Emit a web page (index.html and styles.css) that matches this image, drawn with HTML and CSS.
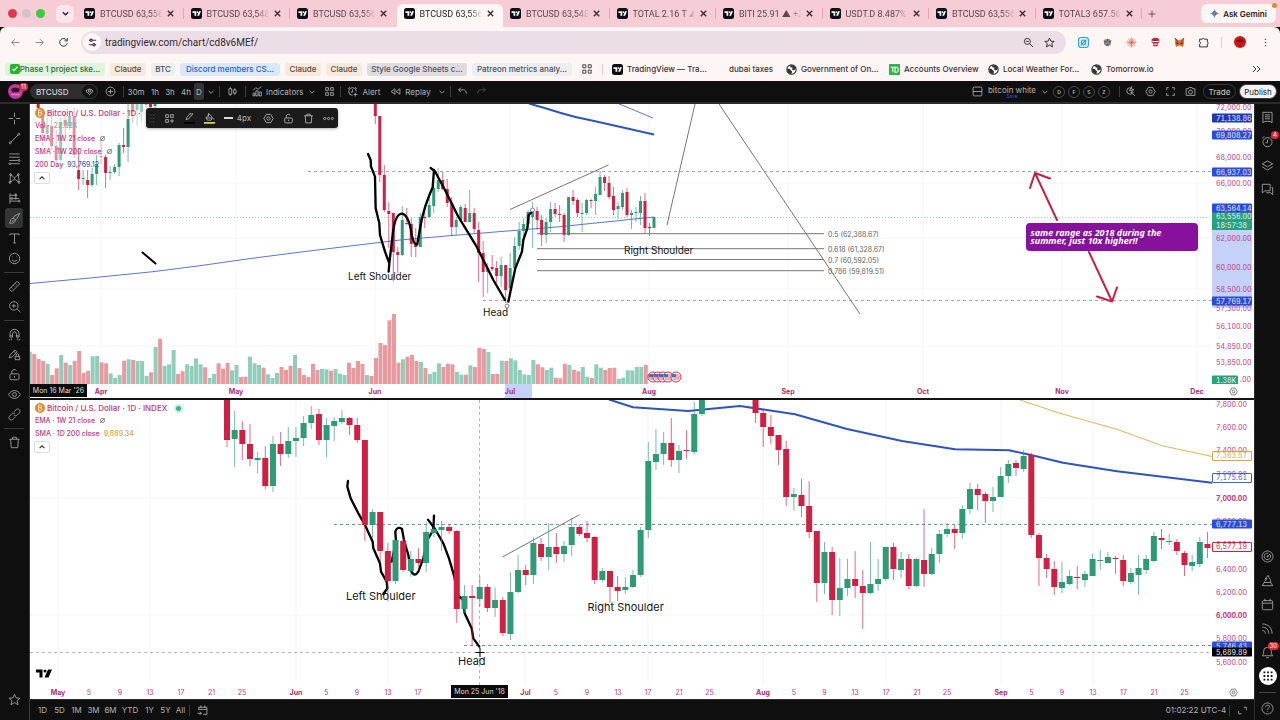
FILE: index.html
```html
<!DOCTYPE html>
<html lang="en">
<head>
<meta charset="utf-8">
<title>BTCUSD 63,556</title>
<link rel="stylesheet" href="styles.css">
</head>
<body>
<svg class="sprite" aria-hidden="true">
  <symbol id="tv" viewBox="0 0 22 22"><rect width="22" height="22" rx="5" fill="#0b0d12"/><path d="M3 6.500h7.500v9H7V10H3zM16 6.500h4l-3.800 9h-3.800z" fill="#fff"/><circle cx="13" cy="8.300" r="1.800" fill="#fff"/></symbol>
  <symbol id="x" viewBox="0 0 10 10"><path d="M2 2l6 6M8 2l-6 6"/></symbol>
  <symbol id="down" viewBox="0 0 10 10"><path d="M2 3.500l3 3 3-3"/></symbol>
  <symbol id="up" viewBox="0 0 10 10"><path d="M2 6.500l3-3 3 3"/></symbol>
  <symbol id="globe" viewBox="0 0 20 20"><circle cx="10" cy="10" r="8.500" fill="#fff" stroke="#333" stroke-width="2"/><path d="M2 8l5 1 2 3 2 1-1 5C5 18 2 14 2 8zM7 2l8 1 3 6-4 3-3-2 1-3-4-1z" fill="#333" stroke="none"/></symbol>
  <symbol id="apps" viewBox="0 0 20 20"><path d="M3 3h5v5H3zM12 3h5v5h-5zM3 12h5v5H3zM12 12h5v5h-5z"/></symbol>
  <symbol id="appsplus" viewBox="0 0 20 20"><path d="M3 3h5v5H3zM12 3h5v5h-5zM3 12h5v5H3zM14.500 11v7M11 14.500h7"/></symbol>
  <symbol id="cross" viewBox="0 0 20 20"><path d="M10 1v7M10 12v7M1 10h7M12 10h7"/></symbol>
  <symbol id="line" viewBox="0 0 20 20"><circle cx="3.500" cy="16.500" r="1.500"/><circle cx="16.500" cy="3.500" r="1.500"/><path d="M4.500 15.500l11-11"/></symbol>
  <symbol id="fib" viewBox="0 0 20 20"><path d="M2 3h16M2 8h16M2 13h13M5 18h13"/><circle cx="17" cy="13" r="1.500"/><circle cx="3" cy="18" r="1.500"/></symbol>
  <symbol id="pattern" viewBox="0 0 20 20"><path d="M3 16L4 4l6 5 6-5 1 12-7-5zM10 9v2"/><circle cx="4" cy="4" r="1.500"/><circle cx="16" cy="4" r="1.500"/><circle cx="3" cy="16" r="1.500"/><circle cx="17" cy="16" r="1.500"/></symbol>
  <symbol id="forecast" viewBox="0 0 20 20"><path d="M3 2v16M3 5h8M3 14h12M7 10h10M12 2v10M3 10h2"/><circle cx="12" cy="5" r="1.500"/><circle cx="17" cy="14" r="1.500"/><circle cx="6" cy="10" r="1.500"/></symbol>
  <symbol id="brush" viewBox="0 0 20 20"><path d="M2 17c2-1 1-5 4-7 3-1 6 1 5 4-1 3-6 4-9 3zM8 10l2-4 8-4-4 8-4 3M6 14h3"/></symbol>
  <symbol id="text" viewBox="0 0 20 20"><path d="M3 5V3h14v2M10 3v14M8 17h4"/></symbol>
  <symbol id="smile" viewBox="0 0 20 20"><circle cx="10" cy="10" r="8"/><path d="M6 12c2 3 6 3 8 0M7 7v1M13 7v1"/></symbol>
  <symbol id="ruler" viewBox="0 0 20 20"><path d="M2 14L14 2l4 4L6 18zM5 11l2 2M8 8l2 2M11 5l2 2"/></symbol>
  <symbol id="zoom" viewBox="0 0 20 20"><circle cx="9" cy="9" r="6.500"/><path d="M14 14l5 5M6 9h6M9 6v6"/></symbol>
  <symbol id="search" viewBox="0 0 20 20"><circle cx="8" cy="8" r="5.500"/><path d="M12 12l6 6M5.500 8h5"/></symbol>
  <symbol id="magnet" viewBox="0 0 20 20"><path d="M3 14V9a7 7 0 0 1 14 0v5h-4V9a3 3 0 0 0-6 0v5zM3 12h4M13 12h4M5 16v3M15 16v3M2 17v2M18 17v2"/></symbol>
  <symbol id="penlock" viewBox="0 0 20 20"><path d="M2 15l1-4 8-8 3 3-8 8zM9 5l3 3M11 13h7v5h-7zM12.500 13v-2a2 2 0 0 1 4 0v2"/></symbol>
  <symbol id="lock" viewBox="0 0 20 20"><rect x="3" y="9" width="14" height="9" rx="2"/><path d="M6 9V5a4 4 0 0 1 7-1M10 12v3"/></symbol>
  <symbol id="eye" viewBox="0 0 20 20"><path d="M1 10c4-8 14-8 18 0-4 8-14 8-18 0z"/><circle cx="10" cy="10" r="3"/></symbol>
  <symbol id="link" viewBox="0 0 20 20"><path d="M9 6l4-4c3-2 7 2 5 5l-4 4c-2 2-4 1-5 0M11 14l-4 4c-3 2-7-2-5-5l4-4c2-2 4-1 5 0"/></symbol>
  <symbol id="trash" viewBox="0 0 20 20"><path d="M2 5h16M7 5V2h6v3M4 5l1 13h10l1-13"/></symbol>
  <symbol id="star" viewBox="0 0 20 20"><path d="M10 2l2.500 5.500 6 .500-4.500 4 1.500 6-5.500-3.200L4.500 18 6 12 1.500 8l6-.500z"/></symbol>
  <symbol id="plus" viewBox="0 0 20 20"><path d="M10 3v14M3 10h14"/></symbol>
  <symbol id="circleplus" viewBox="0 0 20 20"><circle cx="10" cy="10" r="8"/><path d="M10 5.500v9M5.500 10h9"/></symbol>
  <symbol id="candles" viewBox="0 0 20 20"><path d="M6 2v16M14 4v12"/><path d="M3.500 5h5v10h-5zM11.500 7h5v6h-5z" fill="#0f0f0f"/></symbol>
  <symbol id="indic" viewBox="0 0 20 20"><path d="M2 8l5-5 4 3 6-5M2 18v-5h3v5zM7 18V9h4v9zM13 18v-7h4v7z"/></symbol>
  <symbol id="alarm" viewBox="0 0 20 20"><path d="M17 10a7 7 0 1 0-7 7M10 6v5h-3M2 5l3-3M15 2l3 3M15 12v7M12 15.500h7"/></symbol>
  <symbol id="clock" viewBox="0 0 20 20"><circle cx="10" cy="11" r="7"/><path d="M10 7v5H7M2 5l3-3M15 2l3 3"/></symbol>
  <symbol id="rewind" viewBox="0 0 20 20"><path d="M9 5v10l-7-5zM18 5v10l-7-5z"/></symbol>
  <symbol id="undo" viewBox="0 0 20 20"><path d="M7 3L3 7l4 4M3 7h9c3 0 5 3 5 7"/></symbol>
  <symbol id="redo" viewBox="0 0 20 20"><path d="M13 3l4 4-4 4M17 7H8c-3 0-5 3-5 7"/></symbol>
  <symbol id="layout" viewBox="0 0 20 20"><rect x="2" y="2" width="16" height="16" rx="2"/><path d="M2 10h16"/></symbol>
  <symbol id="quick" viewBox="0 0 20 20"><path d="M9 3a6 6 0 1 0 6 8M13 13l5 5M12 1l-4 7h4l-1 5 5-7h-4z"/></symbol>
  <symbol id="hex" viewBox="0 0 20 20"><path d="M6 2.500h8l4.500 7.500-4.500 7.500H6L1.500 10z"/><circle cx="10" cy="10" r="3"/></symbol>
  <symbol id="full" viewBox="0 0 20 20"><path d="M3 7V3h4M13 3h4v4M17 13v4h-4M7 17H3v-4"/></symbol>
  <symbol id="camera" viewBox="0 0 20 20"><path d="M2 5h4l1-2h6l1 2h4v12H2z"/><circle cx="10" cy="11" r="3.500"/></symbol>
  <symbol id="pencil" viewBox="0 0 20 20"><path d="M4 12l1-4 8-9 3 3-8 9zM11 1l3 3"/><path class="ink-black" d="M0 18h20"/></symbol>
  <symbol id="bucket" viewBox="0 0 20 20"><path d="M4 8l6-6 5 6-2 5H6zM8 0v7M3 9h12M16 9l2 3"/><path class="ink-yellow" d="M0 18h20"/></symbol>
  <symbol id="dots" viewBox="0 0 20 20"><circle cx="3" cy="10" r="2"/><circle cx="10" cy="10" r="2"/><circle cx="17" cy="10" r="2"/></symbol>
  <symbol id="grip" viewBox="0 0 20 20"><path d="M7 3v2M12 3v2M7 9v2M12 9v2M7 15v2M12 15v2"/></symbol>
  <symbol id="list" viewBox="0 0 20 20"><path d="M3 2h14v16l-3-2H6l-3 2zM6 6h8M6 9h8M6 12h8"/></symbol>
  <symbol id="layers" viewBox="0 0 20 20"><path d="M10 3l8 4.500-8 4.500-8-4.500zM2 12l8 5 8-5"/></symbol>
  <symbol id="chat" viewBox="0 0 20 20"><path d="M2 2h12v10H6l-4 3zM16 7h2v11l-3-3H8"/></symbol>
  <symbol id="target" viewBox="0 0 20 20"><circle cx="10" cy="10" r="8.500"/><path d="M14 7a5 5 0 1 1-3-2"/><path d="M10 10l4-4"/><circle cx="10" cy="10" r="1"/></symbol>
  <symbol id="pine" viewBox="0 0 20 20"><path d="M2 18h16l-3-5H5zM5 13c0-3 4-3 4-6l-3 1 5-6c1 4 4 6 4 11"/></symbol>
  <symbol id="cal" viewBox="0 0 20 20"><rect x="2" y="4" width="16" height="14" rx="2"/><path d="M2 8h16M6 1v4M14 1v4"/></symbol>
  <symbol id="goto" viewBox="0 0 20 20"><path d="M3 9V4h15v13h-7M3 8h15M7 1v4M14 1v4M1 15h7M5 12l3 3-3 3"/></symbol>
  <symbol id="feed" viewBox="0 0 20 20"><path d="M2 3c9 0 15 6 15 15M2 8c6 0 10 4 10 10M2 13c3 0 5 2 5 5"/></symbol>
  <symbol id="bell" viewBox="0 0 20 20"><path d="M2 15h16l-2-3V8A6 6 0 0 0 4 8v4zM8 18h4"/></symbol>
  <symbol id="help" viewBox="0 0 20 20"><circle cx="10" cy="10" r="8.500"/><path d="M7 8c0-4 6-4 6-1 0 2-3 2-3 5M10 14v1"/></symbol>
  <symbol id="expand" viewBox="0 0 20 20"><path d="M12 4h5v5M3 11v5h5"/></symbol>
  <symbol id="ban" viewBox="0 0 10 10"><circle cx="5" cy="5" r="3"/><path d="M2 8l6-6"/></symbol>
  <symbol id="btc" viewBox="0 0 20 20"><circle cx="10" cy="10" r="10" fill="#e08a2e" stroke="none"/><path d="M7 5h4c3 0 3 4 .500 4.500C15 10 14 15 11 15H7zM8 9.500h4M9 3v2M9 15v2" stroke="#fff"/></symbol>
</svg>

<header class="tabstrip">
  <div class="lights"><i class="red"></i><i class="grey"></i><i class="green"></i></div>
  <button class="tabsearch" aria-label="Search tabs"><svg><use href="#down"/></svg></button>
  <nav class="tabs" id="tabs"></nav>
  <button class="newtab" aria-label="New tab"><svg><use href="#plus"/></svg></button>
  <button class="gemini"><svg viewBox="0 0 20 20"><path d="M10 0q1.500 8.500 10 10-8.500 1.500-10 10-1.500-8.500-10-10 8.500-1.500 10-10z" fill="#3b7de9"/><path d="M10 0q1.500 8.500 10 10H10z" fill="#d95a4a"/><path d="M0 10q8.500 1.500 10 10V10z" fill="#4aa567"/></svg>Ask Gemini<i></i></button>
</header>

<div class="toolbar">
  <button aria-label="Back" class="dim"><svg viewBox="0 0 20 20"><path d="M17 10H3M9 4l-6 6 6 6"/></svg></button>
  <button aria-label="Forward" class="dim"><svg viewBox="0 0 20 20"><path d="M3 10h14M11 4l6 6-6 6"/></svg></button>
  <button aria-label="Reload"><svg viewBox="0 0 20 20"><path d="M16 6a7 7 0 1 0 1 5M17 2v5h-5"/></svg></button>
  <div class="omnibox">
    <button class="site" aria-label="Site information"><svg viewBox="0 0 20 20"><path d="M2 5h3M10 5h8M2 15h8M15 15h3"/><circle cx="7" cy="5" r="2.500"/><circle cx="13" cy="15" r="2.500"/></svg></button>
    <input type="text" aria-label="Address" value="tradingview.com/chart/cd8v6MEf/">
    <button aria-label="Zoom"><svg><use href="#search"/></svg></button>
    <button aria-label="Bookmark"><svg><use href="#star"/></svg></button>
  </div>
  <div class="extensions">
    <button aria-label="Extension"><svg viewBox="0 0 20 20"><rect x="1" y="1" width="18" height="18" rx="5" fill="#e2f4fd" stroke="#2d9fda" stroke-width="2"/><path d="M6 10c0-6 8-6 8 0s-8 6-8 0M5 15L15 5" stroke="#2d9fda" stroke-width="2"/></svg></button>
    <button aria-label="Extension"><svg viewBox="0 0 20 20"><path d="M3 6q7-6 14 0l-1 7-4 4H8l-4-4z" fill="#8c8c8c" stroke="none"/><path d="M4 9h4M12 9h4M8 14h4M10 4v4" stroke="#444"/></svg></button>
    <button aria-label="Claude"><svg viewBox="0 0 20 20"><path d="M10 1v18M1 10h18M4 4l12 12M16 4L4 16M7 2l6 16M13 2L7 18M2 7l16 6M18 7L2 13" stroke="#d2604a" stroke-width="1"/></svg></button>
    <button aria-label="Extension"><svg viewBox="0 0 20 20"><path d="M3 4q7-5 14 0v6l-3 2v5H6v-5l-3-2z" fill="#c62b3b" stroke="none"/><path d="M4 8h12M7 13h6" stroke="#fff"/><path d="M7 6h6" stroke="#333"/></svg></button>
    <button aria-label="MetaMask"><svg viewBox="0 0 20 20"><path d="M2 2l6 4h4l6-4v10l-2 6-4-2H8l-4 2-2-6z" fill="#df6a2c" stroke="none"/><path d="M4 11l4 1M16 11l-4 1" stroke="#43251a" stroke-width="2"/><path d="M2 2l5 7M18 2l-5 7" stroke="#8d3a20"/></svg></button>
    <button aria-label="Extensions"><svg viewBox="0 0 20 20"><path d="M3 4h5q1-4 4 0h5v5q4 2 0 4v5H3v-5q4-2 0-4z"/></svg></button>
  </div>
  <button class="profile" aria-label="Profile"><svg viewBox="0 0 20 20"><circle cx="10" cy="10" r="10" fill="#d01818" stroke="none"/><path d="M5 8q5-4 10 0v2H5zM8 15h4" fill="#8c0d12" stroke="#8c0d12"/></svg></button>
  <button aria-label="Menu" class="menu"><svg viewBox="0 0 20 20"><path d="M10 3v2M10 9v2M10 15v2" stroke-width="2.500"/></svg></button>
</div>

<nav class="bookmarks">
  <a href="#" class="chip lg phase"><span class="tick"><svg viewBox="0 0 10 10"><path d="M2 5l2 2 4-5"/></svg></span>Phase 1 project ske...</a>
  <a href="#" class="chip sm sand">Claude</a>
  <a href="#" class="chip xs mist">BTC</a>
  <a href="#" class="chip lg sky">Discord members CS...</a>
  <a href="#" class="chip sm sand">Claude</a>
  <a href="#" class="chip sm sand">Claude</a>
  <a href="#" class="chip lg ash">Style Google Sheets c...</a>
  <a href="#" class="chip lg mist">Patreon metrics analy...</a>
  <button class="appsbtn" aria-label="Apps"><svg><use href="#apps"/></svg></button>
  <a href="#" class="mark first"><svg><use href="#tv"/></svg>TradingView — Tra...</a>
  <a href="#" class="mark narrow"><svg></svg>dubai taxes</a>
  <a href="#" class="mark"><svg><use href="#globe"/></svg>Government of On...</a>
  <a href="#" class="mark bank"><svg viewBox="0 0 20 20"><path d="M0 0h20v20H0z" fill="#2cb34a" stroke="none"/><path d="M3 6h8M7 6v9M11 6v9h3q3-1 3-4.500T14 6h-3" stroke="#fff" stroke-width="2"/></svg>Accounts Overview</a>
  <a href="#" class="mark"><svg><use href="#globe"/></svg>Local Weather For...</a>
  <a href="#" class="mark"><svg><use href="#globe"/></svg>Tomorrow.io</a>
  <button class="more" aria-label="More bookmarks"><svg viewBox="0 0 10 10"><path d="M2 2l3 3-3 3M6 2l3 3-3 3"/></svg></button>
</nav>

<div class="tvbar">
  <button class="avatar" aria-label="Account"><svg viewBox="0 0 20 20"><circle cx="10" cy="10" r="10" fill="#c33a9c"/><path d="M4 7q6-5 12 0l-2 4H6z" fill="#30142e"/><path d="M4 13h12v2H4z" fill="#f06cc8"/></svg><span class="badge">11</span></button>
  <div class="symbol"><button>BTCUSD</button><span><svg viewBox="0 0 20 20"><path d="M2 9q8-9 16 0l-8 8z"/><circle cx="10" cy="9" r="2.500"/></svg></span></div>
  <button class="w24" aria-label="Compare"><svg><use href="#circleplus"/></svg></button>
  <i class="sep"></i>
  <button class="w24">30m</button><button class="w14">1h</button><button class="w16">3h</button><button class="w16">4h</button><button class="w10 on">D</button>
  <button class="w14 caret" aria-label="More intervals"><svg><use href="#down"/></svg></button>
  <i class="sep"></i>
  <button class="w24" aria-label="Chart type"><svg><use href="#candles"/></svg></button>
  <i class="sep"></i>
  <button class="named wide"><svg><use href="#indic"/></svg>Indicators</button>
  <button class="w14 caret" aria-label="Favourites"><svg><use href="#down"/></svg></button>
  <button class="w20" aria-label="Templates"><svg><use href="#apps"/></svg></button>
  <i class="sep"></i>
  <button class="named"><svg><use href="#alarm"/></svg>Alert</button>
  <button class="named"><svg><use href="#rewind"/></svg>Replay</button>
  <button class="w14 caret" aria-label="Replay options"><svg><use href="#down"/></svg></button>
  <i class="sep"></i>
  <button class="w24" aria-label="Undo"><svg><use href="#undo"/></svg></button>
  <button class="w14 faint" aria-label="Redo"><svg><use href="#redo"/></svg></button>
  <span class="grow"></span>
  <button class="w20" aria-label="Layout"><svg><use href="#layout"/></svg></button>
  <button class="layoutname">bitcoin white<small>Save</small></button>
  <button class="w16 caret" aria-label="Layouts"><svg><use href="#down"/></svg></button>
  <div class="rounds"><button>D</button><button>F</button><button>S</button><button>Z</button></div>
  <i class="sep"></i>
  <button class="w20" aria-label="Quick search"><svg><use href="#quick"/></svg></button>
  <button class="w20" aria-label="Settings"><svg><use href="#hex"/></svg></button>
  <button class="w20" aria-label="Fullscreen"><svg><use href="#full"/></svg></button>
  <button class="w20" aria-label="Snapshot"><svg><use href="#camera"/></svg></button>
  <button class="trade">Trade</button><button class="publish">Publish</button>
</div>

<main class="workspace">
  <aside class="left">
    <button aria-label="Cross"><svg><use href="#cross"/></svg></button>
    <button aria-label="Trend line"><svg><use href="#line"/></svg></button>
    <button aria-label="Fibonacci"><svg><use href="#fib"/></svg></button>
    <button aria-label="Patterns"><svg><use href="#pattern"/></svg></button>
    <button aria-label="Forecasting"><svg><use href="#forecast"/></svg></button>
    <button aria-label="Brush" class="on"><svg><use href="#brush"/></svg></button>
    <button aria-label="Text"><svg><use href="#text"/></svg></button>
    <button aria-label="Emoji"><svg><use href="#smile"/></svg></button>
    <hr>
    <button aria-label="Measure"><svg><use href="#ruler"/></svg></button>
    <button aria-label="Zoom in"><svg><use href="#zoom"/></svg></button>
    <hr>
    <button aria-label="Magnet"><svg><use href="#magnet"/></svg></button>
    <button aria-label="Keep drawing"><svg><use href="#penlock"/></svg></button>
    <button aria-label="Lock"><svg><use href="#lock"/></svg></button>
    <button aria-label="Hide"><svg><use href="#eye"/></svg></button>
    <button aria-label="Sync"><svg><use href="#link"/></svg></button>
    <hr>
    <button aria-label="Remove"><svg><use href="#trash"/></svg></button>
    <span class="grow"></span>
    <button aria-label="Favourites"><svg><use href="#star"/></svg></button>
  </aside>

  <div class="charts">
    <section class="chart top">
      <div class="plot">
        <svg class="canvas" viewBox="30 104 1182 280" preserveAspectRatio="none">
          <path class="gridline" d="M101 104V384M236 104V384M375 104V384M510 104V384M649 104V384M788 104V384M923 104V384M1062 104V384M1197 104V384M30 183H1212M30 238H1212M30 289H1212M30 346H1212"/>
          <g id="vol"></g>
          <path class="last" d="M30 217.500H1212"/>
          <path class="level grey" d="M308 171.500H1212M483 300.500H1212"/>
          <path class="ma thin" d="M30 283.500L90 278L153 271.700L200 265.700L247 259L293 253L350 246L400 240L450 235.700L560 226.700L654 217"/>
          <g id="topcandles"></g>
          <path class="ma thick" d="M529 103.500Q545 108 560 112.700T593 120.700L654 134.500"/>
          <path class="ma thin" d="M618 103.500L653 118"/>
          <path class="ray" d="M695 104L667 225M719 104L860 314M510 209.500L608.500 165"/>
          <path class="ray" d="M537 233.700H824M537 248.700H824M537 259.500H824M537 270.700H824"/>
          <g class="pen" transform="translate(330 100) scale(.3333)">
            <path d="M114 162L122 180 123 200 135 230 137 325 148 370 150 405 165 455 178 490 176 515M178 490L188 405Q195 342 215 341Q232 342 242 385Q250 440 262 432L272 375Q282 320 308 262L312 210"/>
            <path d="M302 204L315 214 350 280 385 350 440 440 460 480 490 540 525 600M535 605L556 505 576 455 580 420 592 385 596 345 605 336"/>
          </g>
          <path class="pen small" d="M142.500 252.500L155.500 263.500"/>
          <path class="arrow" d="M1057 220L1035 173M1030 188L1035 173L1050 178.500M1089 252L1112 301.500M1097 296.500L1112 301.500L1117 287.500"/>
          <g class="handle"><circle cx="532.500" cy="210" r="2"/><circle cx="507" cy="306" r="2"/></g>
          <g class="flags" id="flags"></g>
        </svg>
        <div class="legend">
          <h2><svg><use href="#btc"/></svg>Bitcoin / U.S. Dollar · 1D ·</h2>
          <p>Vol · <span class="volume">22.32K</span></p>
          <p>EMA · 1W 21 close <svg><use href="#ban"/></svg></p>
          <p>SMA · 1W 200 close <svg><use href="#ban"/></svg></p>
          <p>200 Day <span class="blue">93,769.12</span></p>
          <button aria-label="Collapse"><svg><use href="#up"/></svg></button>
        </div>
        <div class="drawbar">
          <svg><use href="#grip"/></svg>
          <button aria-label="Templates"><svg><use href="#appsplus"/></svg></button>
          <button aria-label="Line colour"><svg><use href="#pencil"/></svg></button>
          <button aria-label="Fill colour"><svg><use href="#bucket"/></svg></button>
          <button class="px"><i></i>4px</button>
          <button aria-label="Settings"><svg><use href="#hex"/></svg></button>
          <button aria-label="Lock"><svg><use href="#lock"/></svg></button>
          <button aria-label="Delete"><svg><use href="#trash"/></svg></button>
          <button aria-label="More"><svg><use href="#dots"/></svg></button>
        </div>
        <div class="notes" id="topnotes"></div>
      </div>
      <div class="prices" id="topprices"></div>
      <div class="times" id="toptimes"></div>
      <button class="axisset" aria-label="Axis settings"><svg><use href="#hex"/></svg></button>
    </section>

    <section class="chart bottom">
      <div class="plot">
        <svg class="canvas" viewBox="30 400 1182 285" preserveAspectRatio="none">
          <path class="gridline" d="M58 400V685M150 400V685M296 400V685M388 400V685M525 400V685M648 400V685M763 400V685M886 400V685M1001 400V685M1093 400V685M30 498H1212M30 615H1212"/>
          <path class="level" d="M334 524.500H1212M464 645.500H1212"/>
          <path class="hair" d="M30 652.500H1212M479.500 400V685"/>
          <path class="ma thick" d="M609 399.500L633 407.300L688 411L740 406L795 414.300L847 429L902 441L955 449.300L1009 450.300L1032 455.300L1063 462.700L1117 471.300L1212 482.700"/>
          <path class="ma gold" d="M1020 400L1060 413.300L1117 429.300L1162 445.700L1212 456.500"/>
          <path class="ray" d="M502.500 557L579.500 514.700"/>
          <g class="pen" transform="translate(320 395) scale(.3333)">
            <path d="M84 258L82 275 92 310 115 355 135 390 158 440 160 460 180 505 183 530 200 560 202 580 190 597M215 500L228 440 226 410Q232 392 246 402L252 435 265 480 272 525Q283 550 295 530L310 490 322 435 340 405 342 362"/>
            <path d="M324 374L345 402 370 445 387 490 403 545 412 600 430 615 434 655 455 700 460 730 478 755"/>
          </g>
          <g id="botcandles"></g>
          <path class="cursor" d="M475.500 652.500H484.500M480 648V657"/>
        </svg>
        <div class="legend">
          <h2><svg><use href="#btc"/></svg>Bitcoin / U.S. Dollar · 1D · INDEX<i class="live"></i></h2>
          <p>EMA · 1W 21 close <svg><use href="#ban"/></svg></p>
          <p>SMA · 1D 200 close <span class="amber">9,889.34</span></p>
          <button aria-label="Collapse"><svg><use href="#up"/></svg></button>
        </div>
        <svg class="brand" viewBox="0 0 32 18"><path d="M0 1h13v16H7V7H0zM24 1h8l-7 16h-8z"/><circle cx="18" cy="4" r="3"/></svg>
        <div class="notes" id="botnotes"></div>
      </div>
      <div class="prices" id="botprices"></div>
      <div class="times" id="bottimes"></div>
      <button class="axisset" aria-label="Axis settings"><svg><use href="#hex"/></svg></button>
    </section>

    <footer class="ranges">
      <button>1D</button><button>5D</button><button>1M</button><button>3M</button><button>6M</button><button class="ytd">YTD</button><button>1Y</button><button class="slim">5Y</button><button class="slim">All</button>
      <i class="sep"></i>
      <button aria-label="Go to date" class="goto"><svg><use href="#goto"/></svg></button>
      <span class="grow"></span>
      <button class="zone">01:02:22 UTC-4</button>
      <i class="sep"></i>
      <button aria-label="Maximise" class="goto"><svg><use href="#expand"/></svg></button>
    </footer>
  </div>

  <aside class="right">
    <button aria-label="Watchlist"><svg><use href="#list"/></svg></button>
    <button aria-label="Alerts"><svg><use href="#clock"/></svg><span class="badge">4</span></button>
    <button aria-label="Object tree"><svg><use href="#layers"/></svg></button>
    <button aria-label="Chats"><svg><use href="#chat"/></svg></button>
    <span class="grow"></span>
    <button aria-label="Screener"><svg><use href="#target"/></svg></button>
    <button aria-label="Pine"><svg><use href="#pine"/></svg></button>
    <button aria-label="Calendar"><svg><use href="#cal"/></svg></button>
    <button aria-label="News"><svg><use href="#feed"/></svg></button>
    <button aria-label="Notifications"><svg><use href="#bell"/></svg><span class="badge">30</span></button>
    <button aria-label="Products"><svg class="big" viewBox="0 0 20 20"><circle cx="10" cy="10" r="10" fill="#fff" stroke="none"/><path d="M5 6h2M9 6h2M13 6h2M5 10h2M9 10h2M13 10h2M5 14h2M9 14h2M13 14h2" stroke="#111" stroke-width="2"/></svg></button>
    <hr>
    <button aria-label="Help"><svg><use href="#help"/></svg></button>
  </aside>
</main>
<script src="chart.js"></script>
</body>
</html>
```

FILE: styles.css
```css
* { box-sizing: border-box; }
body {
  margin: 0; height: 100vh; overflow: hidden;
  display: grid; grid-template-rows: 27px 27px 27px 23px minmax(0, 1fr);
  grid-template-columns: minmax(0, 1fr);
  font-family: Inter, "Liberation Sans", sans-serif; font-size: 8px; line-height: 10px;
  background: #0f0f0f; color: #35282f;
}
button { font: inherit; color: inherit; background: none; border: 0; padding: 0; margin: 0; display: flex; align-items: center; justify-content: center; flex: none; position: relative; white-space: nowrap; }
a { color: inherit; text-decoration: none; }
svg { width: 12px; height: 12px; flex: none; fill: none; stroke: currentColor; stroke-width: 1.5; overflow: visible; }
.sprite { position: absolute; width: 0; height: 0; }
.grow { flex: 1; }
.ink-black { stroke: #000; stroke-width: 3; }
.ink-yellow { stroke: #e9e34a; stroke-width: 3; }
#tv path, #tv rect, #tv circle { stroke: none; }

.tabstrip { display: flex; align-items: center; background: #f6cdd7; }
.lights { display: flex; gap: 5px; padding-left: 8px; width: 56px; }
.lights i { width: 9px; height: 9px; border-radius: 50%; }
.lights .red { background: #dc3a4e; }
.lights .grey { background: #d3c3c8; }
.lights .green { background: #3fca3c; }
.tabsearch { width: 18px; height: 18px; border-radius: 6px; background: #fbe6ec; color: #222; }
.tabsearch svg { width: 9px; height: 9px; }
.tabs { flex: 0 1 1065px; display: flex; margin-left: 3px; height: 27px; min-width: 0; }
.tab { flex: 1 1 0; min-width: 0; display: flex; align-items: center; gap: 3px; padding: 0 8px 0 7px; position: relative; }
.tab > a { flex: 1; min-width: 0; display: flex; align-items: center; gap: 5px; font-family: Roboto, Inter, sans-serif; font-size: 9px; color: #5b464e; }
.tab > a svg { width: 11px; height: 11px; }
.tab > a span { flex: 1; min-width: 0; overflow: hidden; white-space: nowrap; -webkit-mask: linear-gradient(90deg, #000 80%, transparent); mask: linear-gradient(90deg, #000 80%, transparent); }
.tab button { width: 10px; color: #3c2a31; }
.tab button svg { width: 9px; height: 9px; }
.tab::after { content: ""; position: absolute; right: 0; top: 8px; height: 11px; width: 1px; background: #eba4b5; }
.tab.active::after, .tab.before::after { display: none; }
.tab.active::before { content: ""; position: absolute; inset: 4px 0 0 0; background: #fdf6f4; border-radius: 6px 6px 0 0; }
.tab.active > * { z-index: 1; }
.tab.active > a { color: #33262b; }
.newtab { width: 20px; color: #4a343c; }
.newtab svg { width: 10px; height: 10px; }
.gemini { margin: 0 4px 0 auto; height: 19px; width: 75px; gap: 4px; background: #fdf6f4; border-radius: 6px; color: #2b2226; font-weight: 600; font-size: 8px; }
.gemini svg { width: 9px; height: 9px; stroke: none; }
.gemini i { position: absolute; right: -1px; top: -1px; width: 5px; height: 5px; border-radius: 50%; background: #dd8a34; }

.toolbar { display: flex; align-items: center; background: #fdf6f4; padding: 3px 0 0 3px; border-radius: 6px 6px 0 0; color: #3a2f34; }
.toolbar > button { width: 24px; height: 20px; }
.toolbar svg { width: 11px; height: 11px; stroke-width: 1.8; }
.dim { color: #8f858a; }
.omnibox { flex: 1; min-width: 0; display: flex; align-items: center; height: 23px; margin-left: 6px; padding: 0 6px 0 2px; border-radius: 12px; background: #ecdee6; }
.omnibox .site { width: 18px; height: 18px; border-radius: 50%; background: #fdf6f9; }
.omnibox .site svg { width: 9px; height: 9px; stroke-width: 2.5; }
.omnibox input { flex: 1; min-width: 0; border: 0; background: none; font: 10px Roboto, Inter, sans-serif; color: #33262d; padding: 0 0 0 4px; outline: 0; }
.omnibox button { width: 21px; }
.extensions { display: flex; border-right: 1px solid #efc8cf; padding-right: 6px; margin-left: 5px; }
.extensions button { width: 24px; }
.toolbar > .profile { width: 36px; }
.profile svg { width: 12px; height: 12px; }
.toolbar > .menu { width: 14px; margin-right: 8px; }

.bookmarks { display: flex; align-items: center; gap: 5px; padding: 3px 5px 0; background: #fdf6f4; overflow: hidden; color: #3c3136; font-size: 8px; white-space: nowrap; }
.chip { height: 13px; border-radius: 3px; display: flex; align-items: center; justify-content: center; flex: none; font-weight: 500; font-size: 8px; }
.chip.lg { width: 100px; }
.chip.sm { width: 36px; }
.chip.xs { width: 24px; }
.phase { background: #dff3df; color: #2c6b3c; }
.sand { background: #f8e9dc; color: #57493f; }
.mist { background: #eceef0; color: #47515a; }
.sky { background: #d9e8fa; color: #2563c9; }
.ash { background: #dedcdf; color: #55515a; }
.tick { width: 10px; height: 10px; background: #23b52e; border-radius: 2px; display: grid; place-items: center; color: #fff; }
.tick svg { width: 8px; height: 8px; }
.appsbtn { width: 20px; height: 14px; }
.mark { display: flex; align-items: center; gap: 4px; flex: 0 0 98px; font-weight: 500; }
.mark svg { width: 11px; height: 11px; stroke-width: 1; }
.mark.first { border-left: 1px solid #efc8cf; padding-left: 9px; flex-basis: 107px; }
.mark.narrow { flex-basis: 67px; }
.mark.bank { flex-basis: 94px; }
.more { margin: 0 14px 0 auto; }
.more svg { width: 10px; height: 10px; stroke-width: 1; }

.tvbar { display: flex; align-items: center; background: #0f0f0f; border-bottom: 2px solid #2c2c2c; color: #b4b4b4; font-size: 8px; }
.tvbar button { height: 19px; }
.tvbar svg { width: 11px; height: 11px; }
.sep { width: 1px; height: 11px; background: #3b3b3b; margin: 0 0 0 1px; flex: none; }
.avatar { width: 30px; }
.tvbar .avatar svg { width: 15px; height: 15px; stroke: none; }
.badge { position: absolute; background: #e0253f; color: #fff; font-size: 6px; line-height: 8px; min-width: 8px; padding: 0 2px; border-radius: 4px; right: 2px; top: 1px; }
.symbol { display: flex; align-items: center; width: 68px; height: 15px; border-radius: 8px; background: #2e2e2e; }
.symbol button { flex: 1; color: #d4d4d4; font-size: 8px; font-weight: 500; justify-content: flex-start; padding-left: 6px; }
.symbol span { width: 15px; height: 13px; border-radius: 8px; background: #141414; display: grid; place-items: center; margin-right: 1px; }
.tvbar .symbol svg { width: 9px; height: 9px; stroke-width: 2; }
.w10 { width: 10px; } .w14 { width: 14px; } .w16 { width: 16px; } .w20 { width: 20px; } .w24 { width: 24px; }
.tvbar .on { background: #343434; border-radius: 2px; height: 17px; }
.tvbar .caret svg { width: 8px; height: 8px; stroke-width: 1; }
.faint { color: #555; }
.named { gap: 4px; padding: 0 4px 0 6px; }
.named.wide { gap: 3px; padding-right: 2px; }
.layoutname { flex-direction: column; width: 50px; font-size: 8px; line-height: 8px; padding-top: 2px; }
.layoutname small { font-size: 5px; line-height: 5px; color: #2b50d8; }
.rounds { display: flex; gap: 3px; margin-right: 8px; }
.tvbar .rounds button { width: 12px; height: 12px; border: 1px solid #4a4a4a; border-radius: 50%; font-size: 5px; font-weight: 600; line-height: 6px; }
.trade, .publish { border-radius: 8px; border: 1px solid #3a3a3a; }
.tvbar .trade { width: 33px; height: 15px; margin: 0 3px; color: #d0d0d0; }
.tvbar .publish { width: 38px; height: 15px; background: #f3f3f3; color: #222; margin-right: 3px; }

.workspace { display: grid; grid-template-columns: 30px minmax(0, 1fr) 26px; min-height: 0; }
.left, .right { display: flex; flex-direction: column; align-items: center; background: #0f0f0f; color: #a9a9a9; min-height: 0; }
.left { padding: 4px 1px 11px 0; border-right: 1px solid #3a3a3a; }
.left button { width: 18px; height: 20px; flex: 0 1 auto; }
.left .on { background: #343434; border-radius: 3px; }
.left svg, .right svg { width: 13px; height: 13px; stroke-width: 1.3; }
.left hr { width: 20px; height: 1px; border: 0; background: #3a3a3a; margin: 4px 0 3px; flex: none; }
.right { padding-top: 1px; border-left: 1px solid #2c2c2c; }
.right button { width: 25px; height: 24px; }
.right svg.big { width: 18px; height: 18px; }
.right .badge { right: 1px; top: 2px; }
.right hr { width: 17px; height: 1px; border: 0; background: #444; margin: 4px 0 3px; }

.charts { display: flex; flex-direction: column; min-width: 0; min-height: 0; }
.chart { display: grid; grid-template-columns: minmax(0, 1fr) 42px; grid-template-rows: minmax(0, 1fr) 14px; background: #fff; min-height: 0; }
.top { flex: 294 1 0; }
.bottom { flex: 299 1 0; border-top: 2px solid #141414; }
.plot, .prices, .times { position: relative; min-width: 0; min-height: 0; overflow: hidden; }
.canvas { position: absolute; inset: 0; width: 100%; height: 100%; overflow: hidden; }
.gridline { stroke: #f6f6f7; stroke-width: 1; }
.last { stroke: #a9d8c8; stroke-width: 1; stroke-dasharray: 1 2; }
.level { stroke: #6d8fc4; stroke-width: 1; stroke-dasharray: 3 3; }
.level.grey { stroke: #9aa8b0; }
.hair { stroke: #b4b8be; stroke-width: 1; stroke-dasharray: 3 3; }
.ma { stroke: #2f55bd; stroke-linejoin: round; }
.ma.thin { stroke: #5b78c9; stroke-width: 1; }
.ma.thick { stroke-width: 2; }
.ma.gold { stroke: #dcb65e; stroke-width: 1; }
.ray { stroke: #777; stroke-width: 1; }
.pen { stroke: #000; stroke-width: 7; stroke-linecap: round; stroke-linejoin: round; }
.pen.small { stroke-width: 2; }
.arrow { stroke: #c9203f; stroke-width: 2; stroke-linecap: round; stroke-linejoin: round; }
.handle { fill: #fff; stroke: #6b7fc9; stroke-width: 1; }
.cursor { stroke: #000; stroke-width: 1; }
.bull { fill: #2e9b77; stroke: none; }
.bear { fill: #cf1f43; stroke: none; }
.soft { opacity: .5; }
.wick { opacity: .65; }
.vbull { fill: #8fceba; stroke: none; }
.vbear { fill: #ea9a9f; stroke: none; }

.legend { position: absolute; left: 4px; top: 3px; color: #c4377d; display: flex; flex-direction: column; align-items: flex-start; }
.bottom .legend { top: 2px; }
.legend h2 { margin: 0; display: flex; align-items: center; gap: 2px; font-size: 8px; line-height: 12px; font-weight: 500; white-space: nowrap; padding-left: 1px; }
.legend h2 svg { width: 10px; height: 10px; }
.legend p { margin: 0; display: flex; align-items: center; gap: 4px; font-size: 7px; line-height: 13px; font-weight: 500; white-space: nowrap; padding-left: 1px; }
.legend p svg { width: 7px; height: 7px; stroke-width: 1; color: #555; }
.legend button { width: 16px; height: 12px; margin-top: 1px; border: 1px solid #ddd; border-radius: 2px; background: #fff; color: #333; }
.legend button svg { width: 8px; height: 8px; }
.volume { color: #8aa79c; } .blue { color: #3c66c6; } .amber { color: #d9a548; }
.live { width: 9px; height: 9px; border-radius: 50%; background: #3fb389; border: 2px solid #cdeee1; margin-left: 5px; }
.brand { position: absolute; left: 6px; bottom: 7px; width: 16px; height: 9px; fill: #000; stroke: none; }

.drawbar { position: absolute; left: 116px; top: 4px; height: 20px; display: flex; align-items: center; background: #1b1b1b; border-radius: 3px; color: #b8b8b8; box-shadow: 0 1px 3px #0005; }
.drawbar > svg { width: 11px; height: 11px; margin-left: 1px; color: #555; }
.drawbar button { width: 20px; height: 20px; }
.drawbar button svg { width: 11px; height: 11px; }
.drawbar > svg + button { margin-left: 1px; }
.drawbar .px { width: 39px; gap: 4px; font-size: 8px; padding-right: 2px; }
.px i { width: 9px; height: 2px; background: #ddd; }

.note { position: absolute; transform: translate(0, -50%); white-space: nowrap; color: #161616; font-size: 10px; line-height: 12px; }
.note.large { font-size: 11px; }
.note.fib { font-size: 7px; line-height: 9px; color: #666; }
.note.callout { background: #87109c; color: #fff; border-radius: 4px; width: 172px; height: 28px; padding: 6px 5px 4px; font: italic 700 9px/8px "Noto Sans", "Open Sans", sans-serif; }
.price { position: absolute; right: 2px; width: 40px; padding-left: 4px; transform: translateY(-50%); font-size: 7px; line-height: 9px; color: #c4377d; white-space: nowrap; font-variant-numeric: tabular-nums; }
.price.bold { font-weight: 700; }
.price.tag { color: #eef; background: #2a4bdb; border-radius: 1px; }
.price.tag.navy { background: #2138b4; }
.price.tag.mint { background: #26a27a; }
.price.tag.ink { background: #000; }
.price.tag.open { background: #fff; border: 1px solid; line-height: 8px; padding-left: 3px; }
.price.tag.gold { color: #d9a548; } .price.tag.azure { color: #3c66c6; } .price.tag.crim { color: #cf1f43; }
.price.short { width: 26px; right: 16px; }
.price.tail { padding-left: 28px; }
.band { position: absolute; background: #c4d1f8; }
.prices .band { left: 0; right: 2px; }
.times .band { top: 0; bottom: 0; }
.time { position: absolute; top: 50%; transform: translate(-50%, -50%); font-size: 7px; line-height: 9px; color: #c4377d; white-space: nowrap; }
.time.bold { font-weight: 700; color: #b92c6e; }
.stamp { position: absolute; top: 0; height: 13px; width: 57px; background: #0b0b0b; color: #ddd; font-size: 7px; line-height: 13px; text-align: center; white-space: nowrap; }
.axisset { color: #444; }
.axisset svg { width: 9px; height: 9px; }

.ranges { flex: 0 0 21px; display: flex; align-items: center; background: #0f0f0f; color: #b4b4b4; font-size: 8px; padding-left: 4px; border-top: 1px solid #2c2c2c; }
.ranges button { width: 17px; height: 18px; }
.ranges .ytd { width: 22px; }
.ranges .slim { width: 15px; }
.ranges .goto { width: 24px; }
.ranges .zone { width: 64px; }
.ranges .goto svg { width: 11px; height: 11px; }
```

FILE: chart.js
```javascript
const $ = id => document.getElementById(id);
const LEFT = 30, WIDTH = 1182;

$('tabs').innerHTML = ['BTCUSD 63,556', 'BTCUSD 63,548', 'BTCUSD 63,556', 'BTCUSD 63,556', 'BTCUSD 63,548', 'TOTAL 2.16 T ▲', 'BITI 25.91 ▲ +3', 'USDT.D 8.487%', 'BTCUSD 63,556', 'TOTAL3 657.56']
  .map((t, i) => `<div class="tab${i === 3 ? ' active' : i === 2 ? ' before' : ''}"><a href="#"><svg><use href="#tv"/></svg><span>${t}</span></a><button aria-label="Close tab"><svg><use href="#x"/></svg></button></div>`).join('');

// Each candle: slot, colour, body top, body bottom, high, low, faded flag
function candles(target, rows, x0, step, w) {
  $(target).innerHTML = rows.map(([i, c, t, b, h, l, soft]) => {
    const x = x0 + i * step, k = c === 'g' ? 'bull' : 'bear';
    return `<g class="${k}${soft ? ' soft' : ''}"><rect class="wick" x="${x - .5}" y="${h}" width="1" height="${l - h}"/><rect x="${x - w / 2}" y="${t}" width="${w}" height="${Math.max(1, b - t)}"/></g>`;
  }).join('');
}
const parse = (s, start) => s.trim().split(';').map((r, i) => { const p = r.trim().split(' '); return [start + i, p[0], ...p.slice(1).map(Number)]; });

const year2018 = [
  ...parse(`r 400 440 400 447;g 430 439 411 467;r 430 444 421 460;r 444 459 424 466;g 458 460 452 473;r 458 486 446 489;g 444 486 436 492;r 444 454 432 466;g 441 454 427 458;g 438 441 427 457;g 423 438 416 446;g 415 423 406 429;r 414 440 409 445;g 425 440 418 457;g 421 426 417 441;g 418 422 410 424;r 418 425 417 435;r 425 440 418 443;r 440 525 440 541;g 512 525 509 538;r 512 551 512 562;r 551 581 543 601;g 540 581 540 584;r 541 570 538 572;g 559 571 551 577;r 559 563 548 567;g 532 563 522 572;g 529 533 527 537;g 527 530 521 551;r 527 531 524 534;r 531 609 530 623;g 596 609 585 613;r 596 598 585 646;g 587 599 576 607;r 587 608 584 612;g 600 608 588 617;r 600 633 597 636;g 592 634 572 640;g 570 592 555 593;r 570 575 565 585;g 543 575 537 584;r 544 557 538 561;g 547 557 523 570;r 547 554 533 563;g 546 554 541 562;g 527 545 518 556;r 527 534 525 536;r 533 538 521 542;r 537 580 536 584;g 571 580 568 582;r 571 587 571 603;r 587 591 576 601;g 587 590 577 594;g 575 587 570 588;g 530 575 527 577;g 461 530 442 538;g 454 462 429 470;g 443 454 432 465;r 443 460 418 467;g 451 460 445 473;r 450 451 430 459;g 414 452 402 454;g 398 414 398 416`, 0),
  ...parse(`r 398 413 398 423;r 413 427 410 447;r 427 436 415 444;r 435 450 435 465;r 449 497 441 506;g 494 497 488 511;r 495 506 479 517;r 506 532 481 538;r 531 583 531 602;g 552 583 542 594;r 552 600 547 615;g 588 600 558 616;g 579 588 559 596;r 579 586 551 598;r 586 593 570 629;g 584 593 542 594;g 579 584 559 591;g 547 579 547 581;r 547 569 543 580;g 559 570 552 578;r 559 586 554 589;g 559 586 558 587;r 560 574 509 587;g 554 574 548 575;g 534 554 530 563;g 529 534 523 537;r 529 533 525 549;g 509 533 505 539;g 489 509 483 514;r 489 495 484 510;r 494 501 492 523;g 497 501 487 512;g 476 497 467 497;g 464 476 460 483;r 463 468 460 476;g 456 469 450 472;r 455 535 453 538;r 535 558 533 586;r 558 569 554 578;r 569 587 561 595;g 582 588 562 593;g 576 584 570 585;r 577 578 566 589;g 574 580 571 587;g 559 576 554 576;g 560 561 550 570;g 557 563 552 563;r 558 559 556 574;r 560 581 555 586;g 573 582 568 584;g 568 575 555 595;g 559 570 555 574;g 536 561 532 562;r 538 540 529 549;g 541 542 534 545;r 542 551 539 555;r 553 565 551 576;g 562 566 555 571;g 542 564 537 567;r 544 548 532 558`, 69)
];
candles('botcandles', year2018, 227, 7.66, 6);

const year2026 = [
  ...parse(`r 104 108 104 110;r 115 133 108 146 1;g 125 134 110 136 1;r 126 146 112 150 1;r 146 160 130 162 1;g 122 160 118 162 1;r 120 126 112 135 1;g 116 126 110 130 1;r 116 155 108 158 1;r 170 179 148 190;g 178 179 170 185;r 180 185 170 198;g 174 185 168 187;g 164 174 155 185;r 156 157 140 164 1;r 157 173 155 188;g 172 173 166 180;g 167 172 164 174;g 145 167 143 176;r 145 147 128 153;g 119 147 104 162;r 104 112 104 123 1;g 104 110 104 126 1;g 104 112 104 122 1;r 104 105 104 108 1;r 104 107 104 109;g 104 106 104 108`, -75),
  ...parse(`r 100 116 100 124;r 116 175 116 182;r 175 210 165 212;r 211 214 202 248;r 213 252 213 281;r 252 255 247 273;g 220 255 206 256;r 223 224 208 225;r 224 244 218 257;r 243 247 228 257;g 217 247 213 247;r 217 218 205 228;g 205 217 197 218;g 188 206 186 213;g 180 189 168 192;r 180 189 172 190;r 189 203 179 207;r 203 227 197 236;g 220 227 217 235;g 207 220 205 221;r 208 222 204 222;g 213 222 190 222;r 213 229 208 233;r 230 253 222 282;r 253 272 241 297;g 268 272 263 293;r 267 269 255 271;r 268 276 261 283;g 265 276 257 287;r 265 290 265 303;g 268 288 253 297;g 246 268 237 270;g 231 246 222 250;g 224 231 218 243;g 212 224 210 228;g 210 217 202 248;r 211 220 207 230;r 220 235 215 246;g 222 235 218 243;g 209 222 202 232;r 209 214 203 217;r 214 215 205 222;r 215 235 213 242;g 197 235 197 236;r 197 201 190 205;r 200 213 198 217;g 213 214 203 232;g 200 213 199 215;r 200 201 199 208;g 194 201 187 215;g 177 195 171 195;r 177 183 175 191;r 183 197 176 199;r 196 210 187 215;g 206 209 202 219;g 193 207 190 210;r 192 215 188 217;g 213 215 210 229;g 212 213 207 222;g 201 213 196 225;r 201 228 193 234;r 227 228 223 236;g 217 228 217 228`, 0)
];
candles('topcandles', year2026, 375.3, 4.495, 3);

// Volume columns: colour and column top in thirds of a pixel
const vol = 'g755 r762 r777 r783 g792 r825 r805 g765 r788 g795 r783 r753 r819 r812 g769 g768 r787 r790 g820 g834 g825 r782 g778 r780 g783 g783 g828 r817 g741 r716 g798 g793 g750 r822 r814 g793 g798 g775 g793 r802 g834 g822 r790 r806 r789 g811 g795 r831 r830 g770 g790 g795 r803 g823 g834 g819 r801 r810 r797 g765 r804 r825 r831 r792 r810 g807 g808 r812 g807 g821 g825 r788 r804 r783 r792 g825 r828 r774 r729 r735 r661 r642 r788 g778 r770 r765 r783 g786 r804 g822 g816 g790 r801 r791 r793 g816 g824 r824 g796 r801 r743 r747 g756 r822 r822 g782 r783 g775 g781 g810 g823 g825 g780 r793 r802 g810 g803 r833 r835 r791 g795 r809 r814 g801 g830 r834 g793 g803 r810 r804 r803 g837 g833 g811 g811 g801 g801 r795'.split(' ');
$('vol').innerHTML = vol.map((v, i) => { const y = 100 + v.slice(1) / 3; return `<rect class="v${v[0] === 'g' ? 'bull' : 'bear'}" x="${(27.7 + i * 4.497).toFixed(2)}" y="${y.toFixed(1)}" width="4" height="${(384 - y).toFixed(1)}"/>`; }).join('');

$('flags').innerHTML = [653, 658, 663, 668, 676].map(x => `<circle cx="${x}" cy="377" r="5" fill="#fff" stroke="#c9304e" stroke-width="1"/><path d="M${x - 3} 375h6M${x - 4} 377h8M${x - 3} 379h6" stroke="#dd5a6b" stroke-width="1"/><path d="M${x - 4} 374h4v3h-4z" fill="#3f74c0" stroke="none"/>`).join('');

const pct = n => (n * 100).toFixed(3) + '%';
function notes(target, list, y0, h) {
  $(target).innerHTML = list.map(([x, y, t, c = '']) => `<div class="note ${c}" style="left:${pct((x - LEFT) / WIDTH)};top:${pct((y - y0) / h)}">${t}</div>`).join('');
}
notes('topnotes', [[348, 276.5, 'Left Shoulder'], [483, 312.500, 'Head'], [624, 250.500, 'Right Shoulder'],
  [828, 234, '0.5 (62,388.67)', 'fib'], [828, 249, '0.618 (61,328.67)', 'fib'], [828, 260, '0.7 (60,592.05)', 'fib'], [828, 271, '0.786 (59,819.51)', 'fib'],
  [1025.5, 237, 'same range as 2018 during the<br>summer, just 10x higher!!', 'callout']], 104, 280);
notes('botnotes', [[346, 596, 'Left Shoulder', 'large'], [458, 661, 'Head', 'large'], [587.5, 607.500, 'Right Shoulder', 'large']], 400, 285);

function prices(target, list, y0, h, band = '') {
  $(target).innerHTML = band + list.map(([y, t, c = '']) => `<div class="price ${c}" style="top:${pct((y - y0) / h)}">${t}</div>`).join('');
}
prices('topprices', [[107, '72,000.00'], [131, '70,000.00'], [118, '71,138.86', 'tag navy'], [134.500, '69,808.27', 'tag'], [157, '68,000.00'], [172, '66,937.03', 'tag'], [183, '66,000.00'],
  [221, '63,556.00<br>18:57:38', 'tag mint'], [208.500, '63,564.14', 'tag'], [238, '62,000.00'], [267, '60,000.00'], [289, '58,500.00'], [307.500, '57,300.00'], [301, '57,769.17', 'tag'],
  [326, '56,100.00'], [346, '54,850.00'], [362, '53,850.00'], [378.500, '.00', 'tail'], [379.500, '1.38K', 'tag mint short']], 104, 280,
  `<div class="band" style="top:${pct(104 / 280)};height:${pct(100 / 280)}"></div>`);
prices('botprices', [[404, '7,800.00'], [427, '7,600.00'], [450, '7,400.00'], [455.500, '7,363.57', 'tag open gold'], [474, '7,200.00'], [477.500, '7,175.61', 'tag open azure'], [497.500, '7,000.00', 'bold'],
  [521, '6,800.00'], [524.500, '6,777.13', 'tag'], [544, '6,600.00'], [547.500, '6,577.19', 'tag open crim'], [568.500, '6,400.00'], [592, '6,200.00'], [615, '6,000.00', 'bold'], [638.500, '5,800.00'],
  [646, '5,746.43', 'tag'], [652, '5,689.89', 'tag ink'], [662, '5,600.00']], 400, 285);

function times(target, list, extra) {
  $(target).innerHTML = extra + list.map(([x, t]) => `<span class="time${isNaN(t) ? ' bold' : ''}" style="left:${pct((x - LEFT) / WIDTH)}">${t}</span>`).join('');
}
times('toptimes', [[101, 'Apr'], [236, 'May'], [375, 'Jun'], [510, 'Jul'], [649, 'Aug'], [788, 'Sep'], [923, 'Oct'], [1062, 'Nov'], [1197, 'Dec']],
  `<div class="band" style="left:${pct(475 / WIDTH)};width:${pct(27 / WIDTH)}"></div><div class="stamp" style="left:0">Mon 16 Mar '26</div>`);
times('bottimes', [[58, 'May'], [89, 5], [120, 9], [150, 13], [181, 17], [211.5, 21], [242, 25], [296, 'Jun'], [326.5, 5], [357, 9], [388, 13], [418, 17], [525.5, 'Jul'], [556, 5], [587, 9], [618, 13], [648, 17], [679, 21], [709.5, 25], [763, 'Aug'], [794, 5], [824.5, 9], [855, 13], [886, 17], [917, 21], [947, 25], [1001, 'Sep'], [1031.5, 5], [1062, 9], [1093, 13], [1123.5, 17], [1154, 21], [1184.5, 25]],
  `<div class="stamp" style="left:${pct(421 / WIDTH)}">Mon 25 Jun '18</div>`);
```
